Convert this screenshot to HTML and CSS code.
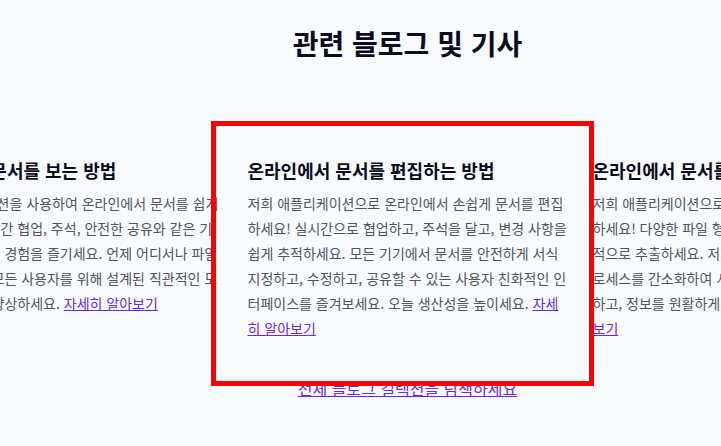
FILE: index.html
```html
<!DOCTYPE html>
<html lang="ko">
<head>
<meta charset="utf-8">
<title>관련 블로그 및 기사</title>
<link rel="stylesheet" href="styles.css">
</head>
<body>
<main class="page">
  <section class="related">
    <h2 class="related-title">관련 블로그 및 기사</h2>
    <div class="carousel">
      <article class="card">
        <h3 class="card-title">온라인에서 문서를 보는 방법</h3>
        <p class="card-text">저희 애플리케이션을 사용하여 온라인에서 문서를 쉽게 확인하세요. 실시간 협업, 주석, 안전한 공유와 같은 기능을 갖춘 원활한 경험을 즐기세요. 언제 어디서나 파일에 액세스하고, 모든 사용자를 위해 설계된 직관적인 도구로, 생산성을 향상하세요. <a href="#">자세히 알아보기</a></p>
      </article>
      <article class="card">
        <h3 class="card-title">온라인에서 문서를 편집하는 방법</h3>
        <p class="card-text">저희 애플리케이션으로 온라인에서 손쉽게 문서를 편집하세요! 실시간으로 협업하고, 주석을 달고, 변경 사항을 쉽게 추적하세요. 모든 기기에서 문서를 안전하게 서식 지정하고, 수정하고, 공유할 수 있는 사용자 친화적인 인터페이스를 즐겨보세요. 오늘 생산성을 높이세요. <a href="#">자세히 알아보기</a></p>
      </article>
      <article class="card">
        <h3 class="card-title">온라인에서 문서를 추출하는 방법</h3>
        <p class="card-text">저희 애플리케이션으로 온라인에서 문서를 손쉽게 추출하세요! 다양한 파일 형식에서 데이터를 신속하고 효율적으로 추출하세요. 저희의 강력한 도구로 문서 처리 프로세스를 간소화하여 시간을 절약하고 생산성을 극대화하고, 정보를 원활하게 관리하세요. 여기서 <a href="#">자세히 알아보기</a></p>
      </article>
    </div>
    <a class="all-link" href="#">전체 블로그 컬렉션을 탐색하세요</a>
  </section>
  <div class="focus-ring" aria-hidden="true"></div>
</main>
</body>
</html>
```

FILE: styles.css
```css
html {
  overflow: hidden;
  background: #f8fbfd;
}

body {
  margin: 0;
  font-family: "Noto Sans CJK KR", "Noto Sans", sans-serif;
}

.page {
  position: relative;
  width: 815px;
  height: 446px;
  padding-top: 23px;
  box-sizing: border-box;
}

.related-title {
  margin: 0;
  text-align: center;
  font-size: 28px;
  line-height: 40px;
  font-weight: 700;
  color: #0b0b24;
}

.carousel {
  margin-top: 94px;
  display: flex;
  justify-content: center;
  gap: 25px;
}

.card {
  flex: 0 0 320px;
}

.card-title {
  margin: 0;
  font-size: 18px;
  line-height: 26px;
  font-weight: 700;
  color: #0b0b24;
}

.card-text {
  margin: 7.5px 0 0;
  font-size: 14px;
  line-height: 25px;
  color: #4b5563;
}

a {
  color: #6d28d9;
}

.all-link {
  display: block;
  width: max-content;
  margin: 36px auto 0;
  font-size: 16px;
  line-height: 22px;
}

.focus-ring {
  position: absolute;
  left: 211px;
  top: 121px;
  width: 383px;
  height: 265px;
  box-sizing: border-box;
  border: 5px solid #ff0000;
  pointer-events: none;
}
```
